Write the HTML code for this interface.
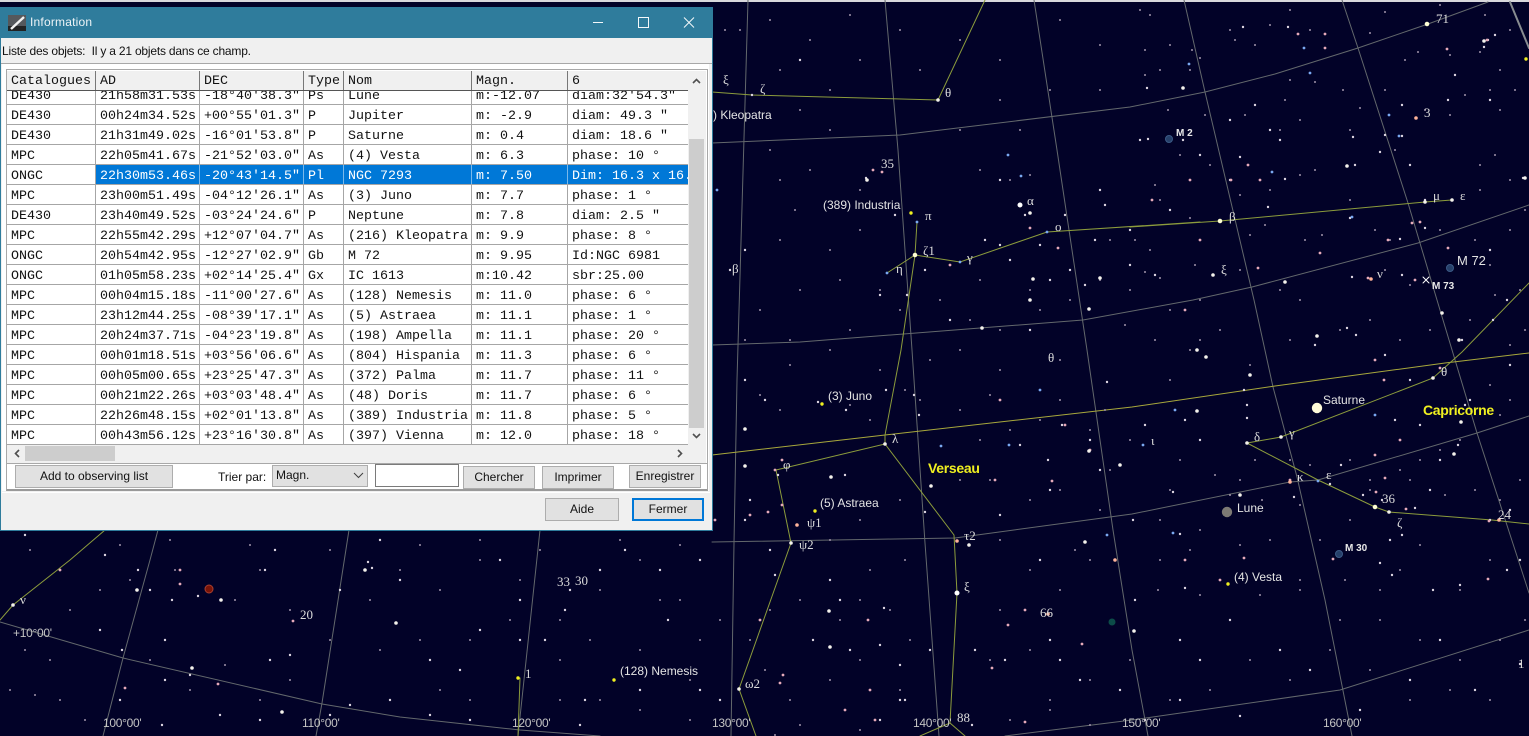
<!DOCTYPE html>
<html><head><meta charset="utf-8"><title>Information</title>
<style>
html,body{margin:0;padding:0;width:1529px;height:736px;overflow:hidden;background:#020228}
#sky{position:absolute;left:0;top:0;filter:blur(.35px)}
#sky text{font-family:"Liberation Sans",sans-serif;font-size:12px;fill:#e4e4e4}
#sky .g{font-family:"Liberation Serif",serif;font-size:13px;fill:#dcdcdc}
#sky .c{font-size:14px;fill:#f0f020;font-weight:bold;letter-spacing:-.3px}
#sky .m{font-size:10px;font-weight:bold;fill:#e8e8e8}
#sky .d{fill:#c4c4c4;letter-spacing:-.3px}
.a{position:absolute;box-sizing:border-box}
.u{font-family:"Liberation Sans",sans-serif;font-size:12px;color:#111;white-space:pre}
.b{background:#e1e1e1;border:1px solid #adadad;text-align:center;line-height:20px}
#grid{left:7px;top:71px;width:681px;height:374px;overflow:hidden;background:#fff}
.r{position:absolute;left:0;width:681px;height:20px;border-bottom:1px solid #a6a6a6;box-sizing:border-box;font:13.33px/23px "Liberation Mono",monospace;color:#111;white-space:pre;background:#fff}
.r span{position:absolute;top:0;height:19px;overflow:hidden;border-right:1px solid #a6a6a6;box-sizing:border-box;padding-left:4px}
.r span:nth-child(1){left:0;width:89px}
.r span:nth-child(2){left:89px;width:104px}
.r span:nth-child(3){left:193px;width:104px}
.r span:nth-child(4){left:297px;width:40px}
.r span:nth-child(5){left:337px;width:128px}
.r span:nth-child(6){left:465px;width:96px}
.r span:nth-child(7){left:561px;width:120px;border-right:0}
.s span:not(:first-child){background:#0078d7;color:#fff;border-right-color:#7ab8ea}
.h{position:absolute;left:0;top:0;width:681px;height:20px;background:#f0f0f0;border-bottom:1px solid #555;box-sizing:border-box;font:13.33px/21px "Liberation Mono",monospace;color:#111;white-space:pre;z-index:2}
.h span{position:absolute;top:0;height:19px;border-right:1px solid #777;box-sizing:border-box;padding-left:4px}
.h span:nth-child(1){left:0;width:89px}
.h span:nth-child(2){left:89px;width:104px}
.h span:nth-child(3){left:193px;width:104px}
.h span:nth-child(4){left:297px;width:40px}
.h span:nth-child(5){left:337px;width:128px}
.h span:nth-child(6){left:465px;width:96px}
.h span:nth-child(7){left:561px;width:120px;border-right:0}
</style></head><body>
<svg id="sky" width="1529" height="736" viewBox="0 0 1529 736" fill="none" stroke-linecap="round">
<rect width="1529" height="736" fill="#020228"/>
<rect width="1529" height="2" fill="#d8d8dc"/>
<g stroke="#63686c" stroke-width="1">
<path d="M748 0L737 380 734 543 731 736"/>
<path d="M885 0L898 150 912 350 925 543 939 736"/>
<path d="M1034 0L1057 150 1087 350 1113 530 1132 650 1148 736"/>
<path d="M1184 0L1205 92 1254 300 1273 387 1297 477 1325 600 1352 736"/>
<path d="M1342 0L1358 48 1408 203 1437 300 1477 433 1529 593"/>
<path d="M158 530L150 560 123 658 103 736M349 530L322 703 316 736M540 530L518 736"/>
<path d="M712 143L900 135 1130 107 1205 92 1275 74 1358 48 1428 24 1488 2"/>
<path d="M712 345L800 342 1083 320 1193 300 1252 287 1418 243 1529 205"/>
<path d="M712 542L955 538 1132 514 1290 482 1318 480 1477 433 1529 416"/>
<path d="M0 622L123 658 322 704 400 717 520 730 600 736M1005 736L1132 720 1340 690 1529 630"/>
</g>
<path d="M1510 2L1529 48" stroke="#888c90" stroke-width="2"/>
<path d="M712 455L885 435 1132 407 1275 386 1445 363 1529 353" stroke="#a8a83c"/>
<g stroke="#8c9c3c">
<path d="M1130 227L1220 221 1425 202 1452 200M917 222L915 255 901 350 885 435 885 444 776 470 791 543 739 689 756 736"/>
<path d="M887 273L915 255 960 262 1047 232 1200 222"/>
<path d="M885 444L954 535 957 593 950 723 965 736M950 723L920 736"/>
<path d="M1247 443L1281 437 1433 378 1462 352 1529 283M1247 443L1318 480 1375 507 1389 512 1492 520 1529 524"/>
<path d="M0 620L13 605 70 560 105 530M520 678L518 736M712 92L752 95 938 100 985 0"/>
</g>
<!-- faint stars -->
<path stroke="#a294aa" stroke-width="2" d="M725 30h0M770 20h0M810 40h0M850 15h0M900 30h0M960 40h0M1000 60h0M1060 20h0M1100 45h0M1150 15h0M1140 10h0M1170 45h0M1192 50h0M1230 30h0M1270 25h0M1290 10h0M1310 30h0M1370 33h0M1385 12h0M1440 5h0M1485 15h0M1510 30h0M1480 52h0M1500 70h0M1450 55h0M1418 52h0M1405 60h0M1255 45h0M1235 40h0M1160 70h0M1145 50h0M1190 70h0M1200 58h0M1290 80h0M1285 100h0M1315 82h0M1343 90h0M1360 108h0M1385 90h0M1425 110h0M1450 115h0M1465 95h0M1490 90h0M1515 90h0M1500 110h0M1168 110h0M1145 75h0M1205 115h0M1245 115h0M1280 130h0M1300 120h0M1350 130h0M1395 150h0M1480 165h0M1480 190h0M1510 180h0M1495 155h0M1300 175h0M1315 170h0M1270 190h0M1240 195h0M1210 165h0M1180 155h0M1155 185h0M1160 200h0M1190 218h0M1135 240h0M1150 250h0M1145 272h0M1160 278h0M1195 265h0M1250 235h0M1265 225h0M1305 240h0M1322 235h0M1350 200h0M1375 230h0M1390 240h0M1385 270h0M1410 285h0M1440 230h0M1475 240h0M1510 230h0M1525 210h0M1490 265h0M1495 295h0M1520 290h0M1300 300h0M1280 290h0M1240 270h0M1200 300h0M740 30h0M780 70h0M830 90h0M860 60h0M920 70h0M1000 100h0M1050 90h0M1100 90h0M1020 130h0M960 130h0M800 110h0M830 130h0M770 150h0M780 180h0M810 170h0M860 190h0M795 210h0M780 240h0M830 250h0M860 230h0M880 290h0M840 280h0M800 290h0M760 310h0M745 340h0M790 340h0M850 330h0M900 310h0M940 300h0M980 280h0M1000 330h0M970 320h0M1030 290h0M1010 180h0M1030 175h0M980 170h0M1040 310h0M1070 300h0M1100 280h0M1110 240h0M1130 290h0M1170 310h0M1155 340h0M1125 325h0M1060 360h0M1000 370h0M960 350h0M930 360h0M880 370h0M830 350h0M790 365h0M760 395h0M780 410h0M850 405h0M870 420h0M905 390h0M920 400h0M960 410h0M990 395h0M1010 430h0M1040 420h0M1060 400h0M1090 430h0M1105 410h0M1190 350h0M1170 380h0M1200 340h0M1220 330h0M1250 365h0M1290 340h0M1340 330h0M1370 320h0M1400 340h0M1430 330h0M1470 320h0M1510 345h0M1525 330h0M1510 400h0M1490 385h0M1500 415h0M1460 440h0M1440 450h0M1420 460h0M1400 470h0M1370 480h0M1350 460h0M1310 465h0M1290 460h0M1255 460h0M1240 480h0M1215 475h0M1180 460h0M1170 490h0M1160 520h0M1200 530h0M1230 495h0M1262 500h0M1270 540h0M1300 505h0M1320 540h0M1350 520h0M1370 490h0M1410 480h0M1445 495h0M1475 490h0M1500 500h0M1520 480h0M1490 560h0M1460 590h0M1420 545h0M1400 570h0M1380 590h0M1345 580h0M1300 580h0M1270 540h0M1240 545h0M1190 550h0M1160 560h0M1158 590h0M1200 595h0M1260 595h0M1300 590h0M1340 620h0M1380 620h0M1420 640h0M1460 660h0M1500 640h0M1525 620h0M1490 700h0M1450 690h0M1410 700h0M1370 670h0M1330 650h0M1290 680h0M1250 660h0M1210 690h0M1170 700h0M1130 660h0M1090 680h0M1050 700h0M1030 650h0M990 660h0M1000 610h0M1030 570h0M1060 590h0M1075 550h0M1090 560h0M1000 540h0M990 480h0M1030 500h0M1060 490h0M1100 510h0M1110 470h0M1130 440h0M980 440h0M960 480h0M900 500h0M860 520h0M830 540h0M870 570h0M905 560h0M890 610h0M860 600h0M840 620h0M800 600h0M770 610h0M750 640h0M765 670h0M790 700h0M830 680h0M860 660h0M900 690h0M910 640h0M880 720h0M860 730h0M800 725h0M775 735h0M1010 720h0M1050 710h0M1090 725h0M680 600h0M640 560h0M600 590h0M560 620h0M520 580h0M480 560h0M440 590h0M400 570h0M370 600h0M330 640h0M290 610h0M260 570h0M235 600h0M175 570h0M130 580h0M100 590h0M70 610h0M50 660h0M25 650h0M10 690h0M35 695h0M60 700h0M85 720h0M150 660h0M190 690h0M225 665h0M260 700h0M290 680h0M380 650h0M420 640h0M470 640h0M510 620h0M560 660h0M590 640h0M640 650h0M690 680h0M700 640h0M720 620h0M440 690h0M470 700h0M560 700h0M600 700h0M640 710h0M690 720h0M660 600h0M30 550h0M120 545h0M170 540h0M250 545h0M330 550h0M420 545h0M480 540h0M540 550h0M620 540h0M680 545h0"/>
<!-- medium stars -->
<path stroke="#ded6e2" stroke-width="2.4" d="M752 95h0M800 60h0M866 178h0M1243 27h0M1288 27h0M1230 120h0M1183 140h0M1148 139h0M1147 88h0M1140 140h0M1240 157h0M1280 140h0M1353 137h0M1385 135h0M1380 152h0M1355 165h0M1402 136h0M1410 165h0M1402 105h0M1448 100h0M1484 47h0M1488 40h0M1455 75h0M1495 35h0M1255 105h0M1270 130h0M1285 179h0M1230 180h0M1268 207h0M1200 155h0M1350 218h0M1425 200h0M1000 180h0M1025 215h0M985 240h0M1105 205h0M1100 190h0M1130 230h0M1170 210h0M1130 265h0M1155 275h0M1352 277h0M1400 239h0M1425 228h0M1402 275h0M1490 100h0M1525 178h0M1490 250h0M1523 178h0M1085 285h0M1065 215h0M1070 270h0M1095 240h0M1010 260h0M1050 280h0M1030 330h0M1000 245h0M730 270h0M745 250h0M880 295h0M907 295h0M895 215h0M925 270h0M950 320h0M1040 245h0M745 380h0M765 400h0M818 402h0M846 410h0M886 390h0M914 395h0M919 415h0M778 475h0M845 475h0M750 500h0M745 520h0M770 550h0M775 575h0M830 580h0M840 600h0M884 608h0M880 645h0M813 640h0M850 650h0M880 720h0M900 700h0M972 725h0M975 650h0M1005 660h0M1040 560h0M1145 425h0M1185 420h0M1230 510h0M1173 492h0M1133 520h0M1100 470h0M1107 382h0M1062 425h0M1090 440h0M1048 460h0M1050 490h0M1020 445h0M1000 515h0M925 512h0M1200 440h0M1244 390h0M1247 405h0M1247 418h0M1315 345h0M1356 335h0M1347 328h0M1385 355h0M1382 500h0M1465 405h0M1458 445h0M1420 425h0M1395 420h0M1410 380h0M1462 340h0M1470 400h0M1493 320h0M1510 365h0M1507 300h0M1390 540h0M1402 535h0M1363 495h0M1294 497h0M1330 484h0M1341 465h0M1415 508h0M1430 490h0M1440 460h0M1490 520h0M1510 510h0M1520 560h0M1392 575h0M1433 590h0M1380 563h0M1460 585h0M1507 570h0M1135 600h0M1180 534h0M1185 588h0M1050 640h0M1080 680h0M1060 660h0M1180 640h0M1230 620h0M1280 650h0M1310 670h0M1360 710h0M1410 680h0M1475 690h0M1520 664h0M1440 640h0M1145 720h0M1180 700h0M1240 716h0M1200 660h0M1120 690h0M930 650h0M905 700h0M900 665h0M165 520h0M25 535h0M60 570h0M105 555h0M138 570h0M172 600h0M198 596h0M100 630h0M122 650h0M150 590h0M165 680h0M190 675h0M165 640h0M270 660h0M290 655h0M265 570h0M275 550h0M340 590h0M372 568h0M380 540h0M400 580h0M368 562h0M430 660h0M460 670h0M480 630h0M520 600h0M570 590h0M565 610h0M500 560h0M545 640h0M600 570h0M625 550h0M660 570h0M700 560h0M668 620h0M640 690h0M585 700h0M580 725h0M520 640h0M720 700h0M700 690h0M470 720h0M430 715h0M390 700h0M350 705h0M330 715h0M260 720h0M220 715h0M162 725h0M120 700h0"/>
<!-- pink stars -->
<path stroke="#e6aaba" stroke-width="2.8" d="M60 570h0M180 570h0M1325 34h0M1325 48h0M1447 49h0M1298 34h0M1248 165h0M1231 180h0M1260 180h0M1258 268h0M1320 253h0M1420 222h0M1388 240h0M1412 223h0M1152 200h0M1415 280h0M1200 240h0M1487 40h0M1448 248h0M1185 310h0M1375 360h0M1375 455h0M1440 368h0M1384 380h0M1290 480h0M1385 478h0M1376 492h0M1406 509h0M1489 521h0M1488 579h0M1244 558h0M1333 559h0M1025 610h0M1052 481h0M1090 450h0M995 480h0M1000 400h0M1065 425h0M1190 180h0M1058 248h0M1030 228h0M950 265h0M775 470h0M782 505h0M750 515h0M782 460h0M768 512h0M760 620h0M783 675h0M780 683h0M868 620h0M1082 644h0M1025 722h0M1008 625h0M992 668h0M875 720h0M845 710h0M870 690h0M715 520h0M180 584h0M293 621h0M218 684h0M125 688h0M1220 580h0M1185 560h0M1400 440h0M873 170h0M882 172h0M1368 278h0"/>
<!-- blue stars -->
<path stroke="#7aa8f0" stroke-width="2.8" d="M717 190h0M1310 73h0M1399 136h0M1272 172h0M1352 217h0M1143 445h0M1173 533h0M1389 115h0M1304 48h0M1008 155h0M1021 176h0M1189 64h0M1009 445h0M941 446h0M1107 535h0M1175 410h0M1375 415h0M1040 390h0M917 222h0M887 273h0M960 262h0M1047 232h0M1318 481h0"/>
<!-- bright stars -->
<path stroke="#f4f2ec" stroke-width="3.6" d="M938 100h0M1030 213h0M867 180h0M1183 88h0M1484 41h0M1347 166h0M1213 275h0M1285 282h0M1525 178h0M1206 357h0M1317 336h0M1461 422h0M1454 454h0M1442 313h0M1459 340h0M745 429h0M745 466h0M831 477h0M931 486h0M969 545h0M1085 542h0M1089 451h0M1120 465h0M982 328h0M1033 279h0M1030 300h0M1100 278h0M1089 309h0M192 668h0M282 712h0M396 623h0M829 611h0M830 647h0M1134 631h0M1197 411h0M137 590h0M221 600h0M1247 443h0M1281 437h0M1433 378h0M1452 200h0M1425 202h0M885 444h0M791 543h0M739 689h0M13 605h0M1389 512h0M1197 350h0M1250 375h0M1240 495h0M365 570h0"/>
<path stroke="#fff" stroke-width="5" d="M1020 205h0M957 593h0"/>
<path stroke="#ffffd4" stroke-width="4.6" d="M915 255h0M1220 221h0M1427 24h0M1375 507h0"/>
<path stroke="#f0f020" stroke-width="3.4" d="M911 213h0M1526 59h0M822 404h0M815 511h0M1228 584h0M614 680h0M518 678h0"/>
<path stroke="#ffb49a" stroke-width="3.6" d="M957 541h0M1290 482h0M1499 520h0M1371 279h0M1416 118h0M1048 614h0M1115 560h0M797 525h0"/>
<!-- deep sky -->
<circle cx="1169" cy="139" r="3.5" fill="#26406a" stroke="#3b5a86"/>
<circle cx="1450" cy="268" r="3.5" fill="#26406a" stroke="#3b5a86"/>
<circle cx="1339" cy="554" r="3.5" fill="#26406a" stroke="#3b5a86"/>
<circle cx="1112" cy="622" r="3.5" fill="#0c4c48"/>
<circle cx="209" cy="589" r="4" fill="#7a1408" stroke="#a84030"/>
<circle cx="1227" cy="512" r="5.2" fill="#7d7a74"/>
<circle cx="1317" cy="408" r="5.2" fill="#fffbd8"/>
<path d="M1423 277l6 6m0-6l-6 6" stroke="#fff"/>
<!-- labels -->
<text x="713" y="119">) Kleopatra</text>
<text x="823" y="209">(389) Industria</text>
<text x="828" y="400">(3) Juno</text>
<text x="820" y="507">(5) Astraea</text>
<text x="620" y="675">(128) Nemesis</text>
<text x="1234" y="581">(4) Vesta</text>
<text x="1323" y="404">Saturne</text>
<text x="1237" y="512">Lune</text>
<text x="928" y="473" class="c">Verseau</text>
<text x="1423" y="415" class="c">Capricorne</text>
<text x="1176" y="136" class="m">M 2</text>
<text x="1457" y="265" style="font-size:13px">M 72</text>
<text x="1432" y="289" class="m">M 73</text>
<text x="1345" y="551" class="m">M 30</text>
<text x="13" y="637" class="d">+10°00'</text>
<text x="103" y="727" class="d">100°00'</text>
<text x="302" y="727" class="d">110°00'</text>
<text x="512" y="727" class="d">120°00'</text>
<text x="712" y="727" class="d">130°00'</text>
<text x="913" y="727" class="d">140°00'</text>
<text x="1122" y="727" class="d">150°00'</text>
<text x="1323" y="727" class="d">160°00'</text>
<g>
<text class="g" x="723" y="84">ξ</text><text class="g" x="760" y="93">ζ</text><text class="g" x="945" y="97">θ</text>
<text class="g" x="881" y="168">35</text><text class="g" x="925" y="220">π</text><text class="g" x="1027" y="205">α</text>
<text class="g" x="1055" y="231">ο</text><text class="g" x="923" y="255">ζ1</text><text class="g" x="896" y="273">η</text>
<text class="g" x="967" y="262">γ</text><text class="g" x="1229" y="221">β</text><text class="g" x="1433" y="200">μ</text>
<text class="g" x="1460" y="200">ε</text><text class="g" x="1436" y="23">71</text><text class="g" x="1424" y="117">3</text>
<text class="g" x="1221" y="274">ξ</text><text class="g" x="732" y="273">β</text><text class="g" x="1377" y="278">ν</text>
<text class="g" x="1048" y="362">θ</text><text class="g" x="892" y="443">λ</text><text class="g" x="807" y="527">ψ1</text>
<text class="g" x="799" y="549">ψ2</text><text class="g" x="783" y="469">φ</text><text class="g" x="964" y="540">τ2</text>
<text class="g" x="964" y="591">ξ</text><text class="g" x="1040" y="617">66</text><text class="g" x="745" y="688">ω2</text>
<text class="g" x="957" y="722">88</text><text class="g" x="557" y="586">33</text><text class="g" x="575" y="585">30</text>
<text class="g" x="300" y="619">20</text><text class="g" x="525" y="678">1</text><text class="g" x="20" y="604">ν</text>
<text class="g" x="1151" y="445">ι</text><text class="g" x="1254" y="441">δ</text><text class="g" x="1289" y="437">γ</text>
<text class="g" x="1441" y="376">θ</text><text class="g" x="1297" y="481">κ</text><text class="g" x="1326" y="479">ε</text>
<text class="g" x="1382" y="503">36</text><text class="g" x="1397" y="527">ζ</text><text class="g" x="1498" y="519">24</text>
<text class="g" x="1518" y="668">1</text>
</g>
</svg>

<!-- dialog -->
<div class="a" style="left:0;top:7px;width:713px;height:524px;background:#f0f0f0;border:1px solid #2f7c9c;border-top:0"></div>
<div class="a" style="left:0;top:7px;width:713px;height:31px;background:#2f7c9c"></div>
<svg class="a" style="left:8px;top:15px" width="18" height="16" viewBox="0 0 18 16">
<rect width="18" height="16" fill="#55585c"/><rect y="11" width="18" height="5" fill="#222"/>
<path d="M3 14L16 2" stroke="#f2f2f2" stroke-width="2.4"/></svg>
<div class="a u" style="left:30px;top:15px;color:#eef4f7;line-height:15px;letter-spacing:.2px">Information</div>
<svg class="a" style="left:590px;top:14px" width="110" height="18" viewBox="0 0 110 18" fill="none" stroke="#f4f8fa" stroke-width="1">
<path d="M3 8.500H13"/><rect x="48.500" y="3.500" width="10" height="10"/><path d="M94 3.500l10 10m0-10l-10 10"/></svg>
<div class="a u" style="left:2px;top:43px;line-height:16px;letter-spacing:-.2px">Liste des objets:  Il y a 21 objets dans ce champ.</div>
<div class="a" style="left:1px;top:63px;width:711px;height:1px;background:#a8a8a8"></div>
<div class="a" style="left:2px;top:64px;width:707px;height:427px;background:#fff"></div>
<div class="a" style="left:6px;top:69px;width:702px;height:422px;border:1px solid #a8a8a8;border-bottom:2px solid #999"></div>
<div class="a" style="left:7px;top:463px;width:700px;height:1px;background:#a8a8a8"></div>

<div id="grid" class="a">
<div class="h"><span>Catalogues</span><span>AD</span><span>DEC</span><span>Type</span><span>Nom</span><span>Magn.</span><span>6</span></div>
<div class="r" style="top:14px"><span>DE430</span><span>21h58m31.53s</span><span>-18°40'38.3"</span><span>Ps</span><span>Lune</span><span>m:-12.07</span><span>diam:32'54.3"</span></div>
<div class="r" style="top:34px"><span>DE430</span><span>00h24m34.52s</span><span>+00°55'01.3"</span><span>P</span><span>Jupiter</span><span>m: -2.9</span><span>diam: 49.3 "</span></div>
<div class="r" style="top:54px"><span>DE430</span><span>21h31m49.02s</span><span>-16°01'53.8"</span><span>P</span><span>Saturne</span><span>m: 0.4</span><span>diam: 18.6 "</span></div>
<div class="r" style="top:74px"><span>MPC</span><span>22h05m41.67s</span><span>-21°52'03.0"</span><span>As</span><span>(4) Vesta</span><span>m: 6.3</span><span>phase: 10 °</span></div>
<div class="r s" style="top:94px"><span>ONGC</span><span>22h30m53.46s</span><span>-20°43'14.5"</span><span>Pl</span><span>NGC 7293</span><span>m: 7.50</span><span>Dim: 16.3 x 16.3</span></div>
<div class="r" style="top:114px"><span>MPC</span><span>23h00m51.49s</span><span>-04°12'26.1"</span><span>As</span><span>(3) Juno</span><span>m: 7.7</span><span>phase: 1 °</span></div>
<div class="r" style="top:134px"><span>DE430</span><span>23h40m49.52s</span><span>-03°24'24.6"</span><span>P</span><span>Neptune</span><span>m: 7.8</span><span>diam: 2.5 "</span></div>
<div class="r" style="top:154px"><span>MPC</span><span>22h55m42.29s</span><span>+12°07'04.7"</span><span>As</span><span>(216) Kleopatra</span><span>m: 9.9</span><span>phase: 8 °</span></div>
<div class="r" style="top:174px"><span>ONGC</span><span>20h54m42.95s</span><span>-12°27'02.9"</span><span>Gb</span><span>M 72</span><span>m: 9.95</span><span>Id:NGC 6981</span></div>
<div class="r" style="top:194px"><span>ONGC</span><span>01h05m58.23s</span><span>+02°14'25.4"</span><span>Gx</span><span>IC 1613</span><span>m:10.42</span><span>sbr:25.00</span></div>
<div class="r" style="top:214px"><span>MPC</span><span>00h04m15.18s</span><span>-11°00'27.6"</span><span>As</span><span>(128) Nemesis</span><span>m: 11.0</span><span>phase: 6 °</span></div>
<div class="r" style="top:234px"><span>MPC</span><span>23h12m44.25s</span><span>-08°39'17.1"</span><span>As</span><span>(5) Astraea</span><span>m: 11.1</span><span>phase: 1 °</span></div>
<div class="r" style="top:254px"><span>MPC</span><span>20h24m37.71s</span><span>-04°23'19.8"</span><span>As</span><span>(198) Ampella</span><span>m: 11.1</span><span>phase: 20 °</span></div>
<div class="r" style="top:274px"><span>MPC</span><span>00h01m18.51s</span><span>+03°56'06.6"</span><span>As</span><span>(804) Hispania</span><span>m: 11.3</span><span>phase: 6 °</span></div>
<div class="r" style="top:294px"><span>MPC</span><span>00h05m00.65s</span><span>+23°25'47.3"</span><span>As</span><span>(372) Palma</span><span>m: 11.7</span><span>phase: 11 °</span></div>
<div class="r" style="top:314px"><span>MPC</span><span>00h21m22.26s</span><span>+03°03'48.4"</span><span>As</span><span>(48) Doris</span><span>m: 11.7</span><span>phase: 6 °</span></div>
<div class="r" style="top:334px"><span>MPC</span><span>22h26m48.15s</span><span>+02°01'13.8"</span><span>As</span><span>(389) Industria</span><span>m: 11.8</span><span>phase: 5 °</span></div>
<div class="r" style="top:354px"><span>MPC</span><span>00h43m56.12s</span><span>+23°16'30.8"</span><span>As</span><span>(397) Vienna</span><span>m: 12.0</span><span>phase: 18 °</span></div>
</div>

<!-- scrollbars -->
<div class="a" style="left:688px;top:71px;width:18px;height:374px;background:#f0f0f0"></div>
<div class="a" style="left:689px;top:139px;width:15px;height:289px;background:#cdcdcd"></div>
<div class="a" style="left:7px;top:445px;width:699px;height:18px;background:#f0f0f0"></div>
<div class="a" style="left:25px;top:446px;width:90px;height:15px;background:#cdcdcd"></div>
<svg class="a" style="left:0;top:0" width="713" height="470" fill="none" stroke="#505050" stroke-width="1.6">
<path d="M693 83l3.500-3.500 3.500 3.500M693 434l3.500 3.500 3.500-3.500M19 450l-3.500 3.500 3.500 3.500M678 450l3.500 3.500-3.500 3.500"/></svg>

<!-- button row -->
<div class="a u b" style="left:15px;top:465px;width:158px;height:23px">Add to observing list</div>
<div class="a u" style="left:218px;top:470px;line-height:15px">Trier par:</div>
<div class="a u" style="left:272px;top:465px;width:96px;height:22px;background:#e1e1e1;border:1px solid #adadad;padding-left:3px;line-height:19px">Magn.</div>
<svg class="a" style="left:353px;top:472px" width="12" height="8" fill="none" stroke="#404040"><path d="M1 1l4.500 4.500L10 1"/></svg>
<div class="a" style="left:375px;top:464px;width:84px;height:23px;background:#fff;border:1px solid #7a7a7a"></div>
<div class="a u b" style="left:463px;top:466px;width:72px;height:23px">Chercher</div>
<div class="a u b" style="left:542px;top:466px;width:72px;height:23px">Imprimer</div>
<div class="a u b" style="left:629px;top:465px;width:72px;height:23px">Enregistrer</div>
<div class="a" style="left:2px;top:492px;width:708px;height:1px;background:#fff"></div>
<div class="a u b" style="left:545px;top:498px;width:74px;height:23px">Aide</div>
<div class="a u b" style="left:632px;top:498px;width:72px;height:23px;border:2px solid #0078d7;line-height:19px">Fermer</div>
</body></html>
